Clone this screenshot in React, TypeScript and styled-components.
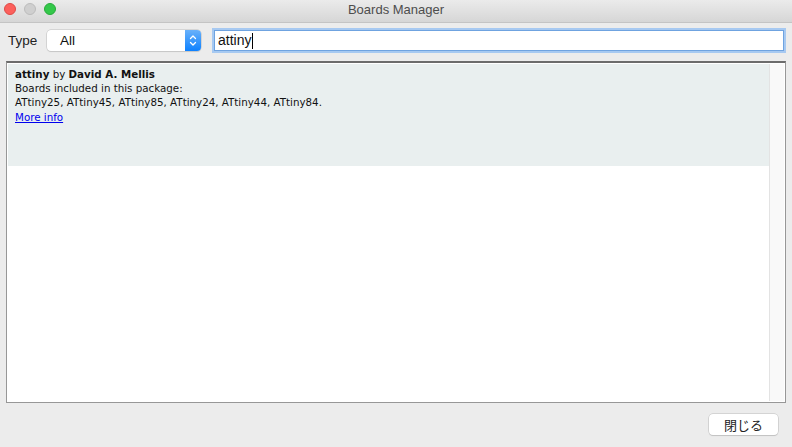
import React from 'react';
import styled, { createGlobalStyle } from 'styled-components';

const GlobalStyle = createGlobalStyle`
  html, body {
    margin: 0;
    padding: 0;
    background: #ececec;
  }
  * {
    box-sizing: border-box;
  }
`;

const Window = styled.div`
  width: 792px;
  height: 447px;
  display: flex;
  flex-direction: column;
  background: #ececec;
  font-family: 'Liberation Sans', Arial, sans-serif;
  overflow: hidden;
`;

const TitleBar = styled.div`
  position: relative;
  height: 23px;
  display: flex;
  align-items: center;
  justify-content: center;
  background: linear-gradient(#ebebeb, #d6d6d6);
  border-bottom: 1px solid #c4c4c4;
`;

const Lights = styled.div`
  position: absolute;
  left: 4px;
  top: 3px;
  display: flex;
  gap: 8px;
`;

const Light = styled.span<{ $color: string; $edge: string }>`
  width: 12px;
  height: 12px;
  border-radius: 50%;
  background: ${(p) => p.$color};
  border: 0.5px solid ${(p) => p.$edge};
`;

const Title = styled.div`
  font-size: 13px;
  color: #4d4d4d;
  margin-top: -3px;
`;

const Toolbar = styled.div`
  height: 38px;
  display: flex;
  align-items: flex-start;
  padding: 7px 8px 0 8px;
`;

const Label = styled.span`
  width: 39px;
  font-size: 13.5px;
  color: #222;
  line-height: 21px;
`;

const Select = styled.div`
  width: 154px;
  height: 21px;
  display: flex;
  background: #fff;
  border-radius: 4px;
  box-shadow: 0 0 0 0.5px #bdbdbd, 0 1px 1px rgba(0, 0, 0, 0.12);
  overflow: hidden;
  margin-right: 13px;
`;

const SelectValue = styled.span`
  flex: 1;
  font-size: 13.5px;
  line-height: 21px;
  padding-left: 13px;
  color: #111;
`;

const Stepper = styled.span`
  width: 16px;
  display: flex;
  align-items: center;
  justify-content: center;
  background: linear-gradient(#69b1fa, #0d81ff);
`;

const SearchInput = styled.div`
  flex: 1;
  height: 21px;
  background: #fff;
  border: 1px solid #6fa3e0;
  box-shadow: 0 0 0 2px #a7c9f1;
  font-size: 14px;
  line-height: 19px;
  padding-left: 3px;
  color: #111;
  display: flex;
  align-items: center;
`;

const Caret = styled.span`
  display: inline-block;
  width: 1px;
  height: 16px;
  background: #000;
  margin-left: 1px;
`;

const Panel = styled.div`
  margin: 0 6px;
  height: 342px;
  display: flex;
  background: #fff;
  border: 1px solid #979797;
  border-top: 2px solid #6c6c6c;
  padding: 1px;
`;

const List = styled.div`
  flex: 1;
  background: #fff;
`;

const Item = styled.div`
  height: 102px;
  background: #e9efef;
  padding: 3px 7px;
  font-family: 'DejaVu Sans', Verdana, sans-serif;
  font-size: 10.3px;
  line-height: 14.2px;
  color: #111;
`;

const Strong = styled.b`
  font-weight: bold;
`;

const Link = styled.a`
  color: #0000ee;
  text-decoration: underline;
`;

const Scrollbar = styled.div`
  width: 15px;
  background: #f9f9f9;
  border-left: 1px solid #e3e3e3;
`;

const Footer = styled.div`
  flex: 1;
  display: flex;
  justify-content: flex-end;
  align-items: flex-start;
  padding: 11px 14px 0 0;
`;

const Button = styled.button`
  width: 69px;
  height: 21px;
  background: #fff;
  border: none;
  border-radius: 4px;
  box-shadow: 0 0 0 0.5px #bcbcbc, 0 1px 1px rgba(0, 0, 0, 0.15);
  font-family: 'Noto Sans CJK JP', sans-serif;
  font-size: 13px;
  color: #222;
  line-height: 19px;
  padding: 0;
`;

export default function App() {
  return (
    <Window>
      <GlobalStyle />
      <TitleBar>
        <Lights>
          <Light $color="#fc605c" $edge="#de4a46" />
          <Light $color="#cfcfcf" $edge="#bcbcbc" />
          <Light $color="#34c84a" $edge="#27aa3a" />
        </Lights>
        <Title>Boards Manager</Title>
      </TitleBar>
      <Toolbar>
        <Label>Type</Label>
        <Select>
          <SelectValue>All</SelectValue>
          <Stepper>
            <svg width="8" height="13" viewBox="0 0 8 13" fill="none" stroke="#fff" strokeWidth="1.3" strokeLinecap="round" strokeLinejoin="round">
              <path d="M1.5 4.5 L4 2 L6.5 4.5" />
              <path d="M1.5 8.5 L4 11 L6.5 8.5" />
            </svg>
          </Stepper>
        </Select>
        <SearchInput>
          attiny<Caret />
        </SearchInput>
      </Toolbar>
      <Panel>
        <List>
          <Item>
            <div>
              <Strong>attiny</Strong> by <Strong>David A. Mellis</Strong>
            </div>
            <div>Boards included in this package:</div>
            <div>ATtiny25, ATtiny45, ATtiny85, ATtiny24, ATtiny44, ATtiny84.</div>
            <div>
              <Link href="#">More info</Link>
            </div>
          </Item>
        </List>
        <Scrollbar />
      </Panel>
      <Footer>
        <Button>閉じる</Button>
      </Footer>
    </Window>
  );
}
